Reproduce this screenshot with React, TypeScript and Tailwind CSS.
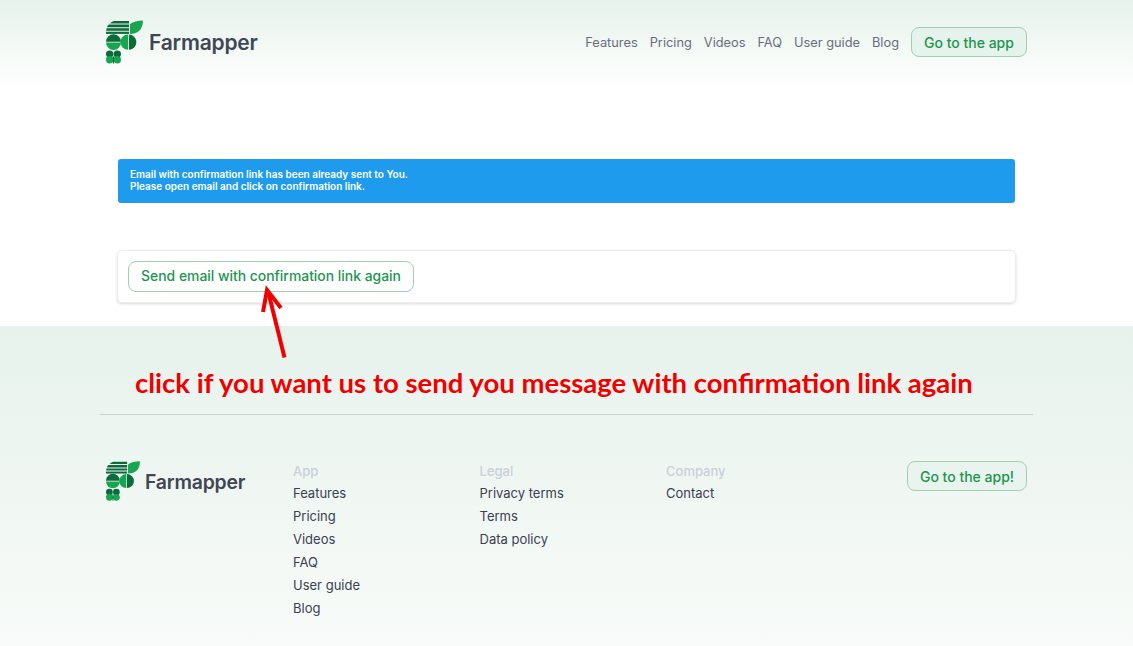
const font = "font-['Inter','Noto_Sans',sans-serif]";

const navLinks = ["Features", "Pricing", "Videos", "FAQ", "User guide", "Blog"];

const footerCols = [
  { title: "App", links: ["Features", "Pricing", "Videos", "FAQ", "User guide", "Blog"] },
  { title: "Legal", links: ["Privacy terms", "Terms", "Data policy"] },
  { title: "Company", links: ["Contact"] },
];

const LogoMark = ({ className }: { className: string }) => (
  <svg viewBox="0 0 37 43" className={className}>
    {/* striped flag */}
    <path d="M8 0.6H23V3H4Q6 1 8 0.6Z" fill="#0b6b3a" />
    <path d="M2.6 4H23V6.8H1Q1.6 5 2.6 4Z" fill="#0b6b3a" />
    <path d="M0.6 7.8H23V10.2H0.2Z" fill="#0b6b3a" />
    <path d="M0 11.2H23V13.4H0Z" fill="#0b6b3a" />
    {/* leaf */}
    <path d="M24 3.6Q29 0 37 0Q36.5 13.4 24 13.4Z" fill="#18a550" />
    {/* big circles */}
    <path d="M0 21.2A7.5 7.5 0 0 1 15 21.2Z" fill="#0b6b3a" />
    <path d="M0 22A7.5 7.5 0 0 0 15 22Z" fill="#18a550" />
    <path d="M22 14A7.6 7.6 0 0 0 22 29.2Z" fill="#18a550" />
    <path d="M22.8 14A7.6 7.6 0 0 1 22.8 29.2Z" fill="#0b6b3a" />
    {/* small circles */}
    <circle cx="3.7" cy="33.6" r="3.7" fill="#0b6b3a" />
    <circle cx="11.3" cy="33.6" r="3.7" fill="#0b6b3a" />
    <circle cx="3.7" cy="39.3" r="3.7" fill="#18a550" />
    <circle cx="11.3" cy="39.3" r="3.7" fill="#18a550" />
    <path d="M7.5 36V43" stroke="#0b6b3a" strokeWidth="1" />
  </svg>
);

const GreenButton = ({ label, className }: { label: string; className: string }) => (
  <a className={`flex items-center justify-center rounded-[8px] border border-[#9fd0b4] font-medium text-[#1c9550] ${className}`}>
    {label}
  </a>
);

export default function App() {
  return (
    <div className={`relative h-[646px] w-[1133px] overflow-hidden bg-white ${font}`}>
      <header className="flex h-[85px] items-start justify-between bg-gradient-to-b from-[#e7f2ec] to-[#fdfefd] px-[106px]">
        <div className="mt-[20px] flex items-center gap-[6px]">
          <LogoMark className="h-[44px] w-[37px]" />
          <span className="pt-[2px] text-[21px] font-semibold tracking-[-0.2px] text-[#3f4654]">Farmapper</span>
        </div>
        <nav className="mt-[27px] flex items-center gap-[12px]">
          {navLinks.map((l) => (
            <a key={l} className="pt-[2px] text-[12.8px] text-[#686e7c]">{l}</a>
          ))}
          <GreenButton label="Go to the app" className="h-[30px] w-[116px] bg-[#e6f3ec] text-[14px]" />
        </nav>
      </header>

      <main className="h-[241px] px-[118px] pt-[74px]">
        <div className="h-[44px] rounded-[3px] bg-[#1f9bee] px-[12px] pt-[9px] text-[10px] font-semibold leading-[12px] text-white">
          Email with confirmation link has been already sent to You.
          <br />
          Please open email and click on confirmation link.
        </div>
        <div className="-mx-px mt-[47px] h-[53px] rounded-[5px] border border-[#ececec] p-[10px] shadow-[0_1px_3px_rgba(0,0,0,0.15)]">
          <GreenButton label="Send email with confirmation link again" className="h-[31px] w-[286px] text-[13.9px]" />
        </div>
      </main>

      <footer className="h-[320px] bg-gradient-to-b from-[#e7f2ec] to-[#f8fbf9] px-[100px]">
        <p className="h-[88px] pl-[35px] pt-[41px] font-['Lato',sans-serif] text-[27.5px] font-bold leading-[32px] text-[#f00000]">
          click if you want us to send you message with confirmation link again
        </p>
        <div className="flex border-t border-[#c9d4ce] px-[6px] pt-[45px]">
          <div className="flex w-[187px] items-center gap-[5px] self-start pt-[1px]">
            <LogoMark className="h-[40px] w-[34px]" />
            <span className="pt-[3px] text-[19.4px] font-semibold tracking-[-0.2px] text-[#3f4654]">Farmapper</span>
          </div>
          {footerCols.map((col) => (
            <div key={col.title} className="w-[186.5px] text-[13px] leading-[23px]">
              <h4 className="h-[22px] font-medium leading-[22px] text-[#c9cfdb]">{col.title}</h4>
              {col.links.map((l) => (
                <a key={l} className="block text-[#3a4150]">{l}</a>
              ))}
            </div>
          ))}
          <GreenButton label="Go to the app!" className="ml-auto mt-[1px] h-[30px] w-[120px] bg-[#e9f4ee] text-[14px]" />
        </div>
      </footer>

      {/* red annotation arrow */}
      <svg className="absolute left-[255px] top-[284px] h-[80px] w-[40px]" viewBox="0 0 40 80" fill="none" stroke="#f00000" strokeWidth="4">
        <path d="M29.5 73.5L13.5 9" />
        <path d="M8 28L12 6L26 24" />
      </svg>
    </div>
  );
}
